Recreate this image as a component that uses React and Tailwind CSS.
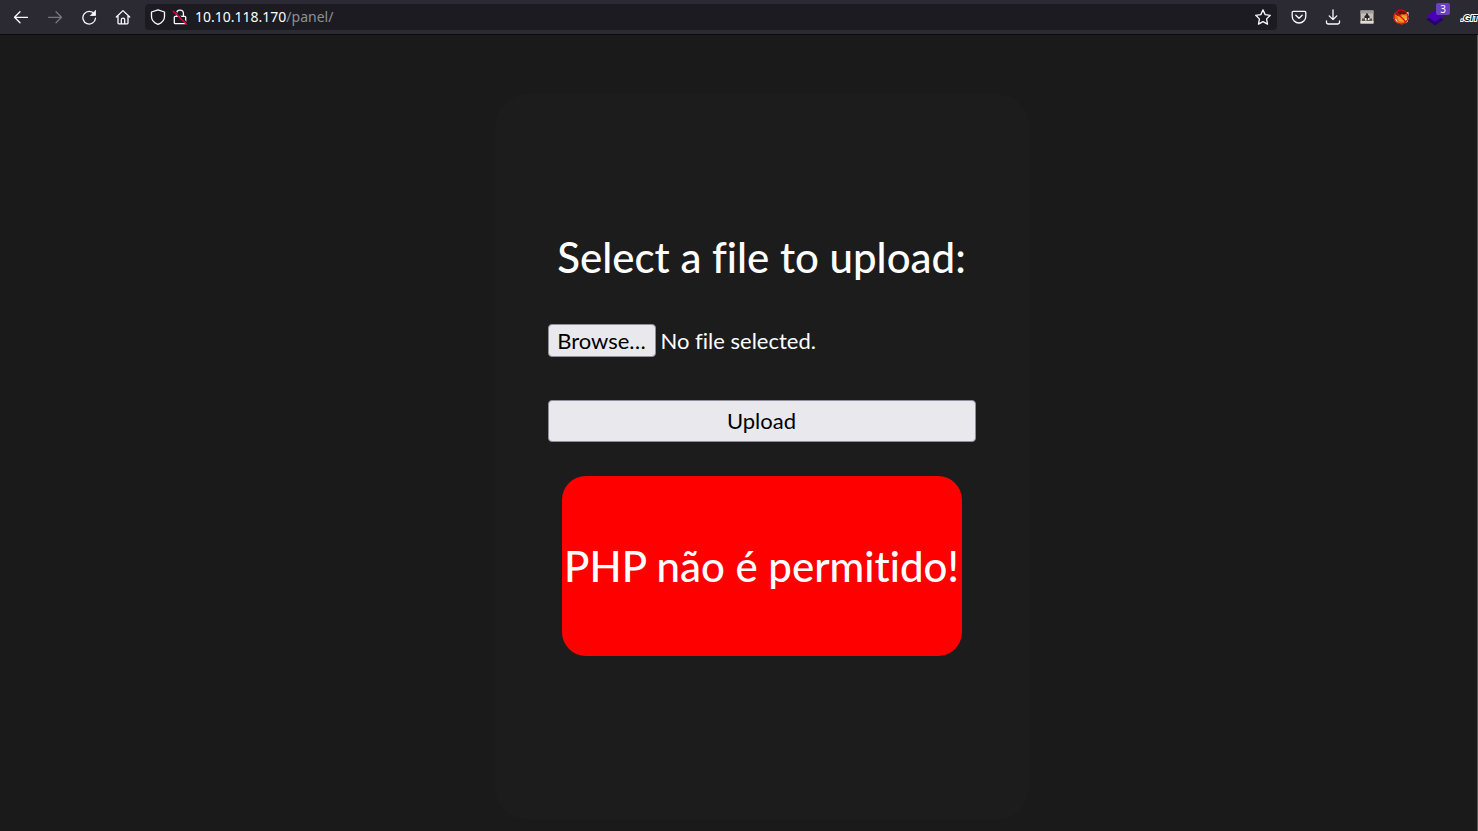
import React from "react";

function Icon({ children, className = "" }) {
  return (
    <svg
      viewBox="0 0 16 16"
      className={`size-4 shrink-0 ${className}`}
      fill="none"
      stroke="currentColor"
      strokeWidth="1.3"
      strokeLinecap="round"
      strokeLinejoin="round"
      aria-hidden="true"
    >
      {children}
    </svg>
  );
}

function ToolButton({ label, className = "", children }) {
  return (
    <button
      type="button"
      aria-label={label}
      className={`flex h-7 w-[34px] shrink-0 items-center justify-center ${className}`}
    >
      {children}
    </button>
  );
}

function BrowserToolbar() {
  return (
    <header className="flex h-[35px] items-center overflow-hidden border-b border-[#0c0c0d] bg-[#2b2a33] pl-1 text-[#fbfbfe]">
      <ToolButton label="Back">
        <Icon><path d="M1.5 8.3h13M7 2.8 1.5 8.3 7 13.8" /></Icon>
      </ToolButton>
      <ToolButton label="Forward" className="text-[#77767d]">
        <Icon><path d="M1.5 8.3h13M9 2.8l5.5 5.5L9 13.8" /></Icon>
      </ToolButton>
      <ToolButton label="Reload">
        <Icon>
          <path d="M13.3 5A6.3 6.3 0 1 0 14.5 9.2" />
          <path d="M14.5 1.7v4.800H9.700z" fill="currentColor" strokeWidth=".8" />
        </Icon>
      </ToolButton>
      <ToolButton label="Home">
        <Icon>
          <path d="M1.300 8 8 1.600 14.700 8M3 7v7a.8.8 0 0 0 .8.8h8.400a.8.8 0 0 0 .8-.8V7" />
          <path d="M6.300 14.500v-3.700a1.700 1.700 0 0 1 3.400 0v3.700" />
        </Icon>
      </ToolButton>

      <div className="ml-[5px] flex h-[26px] min-w-0 flex-1 items-center rounded bg-[#1c1b22] pr-1.5 pl-[5px]">
        <Icon><path d="M8 .8 14.500 3v4.500C14.500 11 11.500 14 8 15.400 4.500 14 1.500 11 1.500 7.500V3z" /></Icon>
        <Icon className="ml-1.5">
          <path d="M4.600 7.200V4.500a3.400 3.400 0 0 1 6.800 0v2.700M3.300 7.300h9.400a1 1 0 0 1 1 1v5.400a1 1 0 0 1-1 1H3.300a1 1 0 0 1-1-1V8.300a1 1 0 0 1 1-1z" />
          <path d="M2.500 1.900 15 14" stroke="#1c1b22" strokeWidth="1.200" />
          <path d="M1.200 2.200 14.500 15.200" stroke="#e8003d" strokeWidth="1.400" />
        </Icon>
        <span className="ml-[7px] min-w-0 flex-1 truncate font-['Noto_Sans',sans-serif] text-sm leading-5">
          10.10.118.170<span className="text-[#8f8f97]">/panel/</span>
        </span>
        <button type="button" aria-label="Bookmark this page">
          <Icon>
            <path d="m8 .900 2.200 4.700 5.100.700-3.700 3.600.9 5.200L8 12.600l-4.500 2.500.9-5.200L.7 6.300l5.100-.7z" />
          </Icon>
        </button>
      </div>

      <div className="ml-[5px] flex w-[196px] shrink-0 items-center">
        <ToolButton label="Save to Pocket">
          <Icon>
            <path d="M2.300 2.300h11.400a1.100 1.100 0 0 1 1.100 1.100v3.800a6.800 6.800 0 0 1-13.600 0V3.400a1.100 1.100 0 0 1 1.100-1.100z" />
            <path d="M4.800 6.300 8 9.300l3.200-3" />
          </Icon>
        </ToolButton>
        <ToolButton label="Downloads">
          <Icon><path d="M8 1v9.500M4.200 6.900 8 10.600l3.800-3.700M1.500 11.800v1.500A1.700 1.700 0 0 0 3.200 15h9.600a1.700 1.700 0 0 0 1.700-1.700v-1.500" /></Icon>
        </ToolButton>
        <ToolButton label="Image extension">
          <svg viewBox="0 0 14 14" className="size-3.5" aria-hidden="true">
            <path d="M.5 .5h13v13H.5z" fill="#c6beb9" />
            <path d="M.5 .5h13v3H.5z" fill="#a19c9a" />
            <path d="M2 8.500h10v2.500H2z" fill="#5b5553" />
            <path d="M4.500 9V6L6 5V3.500h2V5l1.500 1v3z" fill="#292526" />
            <path d="M5 8h1.500v2.500H5zM8 8h1.500v2H8z" fill="#f0eae5" />
            <path d="M.5 11h13v2.500H.5z" fill="#e3dbd5" />
          </svg>
        </ToolButton>
        <ToolButton label="Fox extension">
          <svg viewBox="0 0 16 16" className="size-4" aria-hidden="true">
            <circle cx="8" cy="8" r="7" fill="#5a1713" />
            <path d="m1 4 4 3 4-2 2 .5L15 4l.5 6-2.500 4-4 1.500-5-2L.5 9z" fill="#e66a14" />
            <path d="m4 7 3 1 3-2 4 1-1 4-3 2-4-1z" fill="#f6a126" />
            <path d="m.5 9 3 1.500 1.500 4-3-2zM12.500 10l3-1-1 4-2.500 1z" fill="#fff2df" />
            <path d="M13 3.500 15.500 3v4z" fill="#fff2df" />
            <circle cx="8" cy="8" r="7" fill="none" stroke="#d50d12" strokeWidth="1.200" />
            <path d="m3 3 10 10" stroke="#d50d12" strokeWidth="1.200" />
          </svg>
        </ToolButton>
        <ToolButton label="Layers extension, 3 items" className="relative">
          <svg viewBox="0 0 18 18" className="size-[18px]" aria-hidden="true">
            <path d="m9 6 8.500 5.500L9 17.500.5 11.500z" fill="#25006f" />
            <path d="m9 2 8.500 6L9 14 .5 8z" fill="#4900b3" />
          </svg>
          <span className="absolute top-0 right-0.5 flex h-3 w-3.5 items-center justify-center rounded-xs bg-[#6842bd] font-['Noto_Sans',sans-serif] text-[10px] leading-none">
            3
          </span>
        </ToolButton>
        <button type="button" aria-label="Git extension" className="ml-2 shrink-0">
          <svg viewBox="0 0 18 16" className="h-4 w-[18px]" aria-hidden="true">
            <text
              x="1"
              y="12"
              fontFamily="Liberation Sans, sans-serif"
              fontSize="9"
              fontWeight="700"
              fontStyle="italic"
              fill="#111"
              stroke="#fff"
              strokeWidth="2"
              paintOrder="stroke"
            >
              .GIT
            </text>
          </svg>
        </button>
      </div>
    </header>
  );
}

function UploadForm() {
  return (
    <form
      className="flex w-[534px] max-w-full flex-col rounded-[32px] bg-[#1c1c1c] px-[53px] pt-[135px] pb-[164px]"
      onSubmit={(event) => event.preventDefault()}
    >
      <h1 className="text-center text-[42px] leading-[56px] font-medium whitespace-nowrap">
        Select a file to upload:
      </h1>

      <label className="relative mt-[39px] flex h-[33px] items-center gap-[5px] self-start text-[22px] leading-7">
        <span className="flex h-full w-[108px] items-center justify-center rounded border border-[#8f8f9d] bg-[#e9e9ed] text-black">
          Browse…
        </span>
        <span>No file selected.</span>
        <input
          type="file"
          name="fileUpload"
          className="absolute inset-0 size-full cursor-pointer opacity-0"
        />
      </label>

      <button
        type="submit"
        className="mt-[43px] h-[42px] rounded border border-[#8f8f9d] bg-[#e9e9ed] text-[22px] leading-7 text-black"
      >
        Upload
      </button>

      <p
        role="alert"
        className="mx-3.5 mt-[34px] flex h-[180px] items-center justify-center rounded-3xl bg-[#ff0000] text-[42px] leading-[56px] font-medium whitespace-nowrap"
      >
        PHP não é permitido!
      </p>
    </form>
  );
}

export default function App() {
  return (
    <div className="flex min-h-screen flex-col bg-[#1a1a1a] font-[Lato,sans-serif] text-white [font-variant-ligatures:none]">
      <BrowserToolbar />
      <main className="flex flex-1 justify-center border-r border-[#5c5c5c] pt-[59px] pb-[11px] pl-[46px]">
        <UploadForm />
      </main>
    </div>
  );
}
